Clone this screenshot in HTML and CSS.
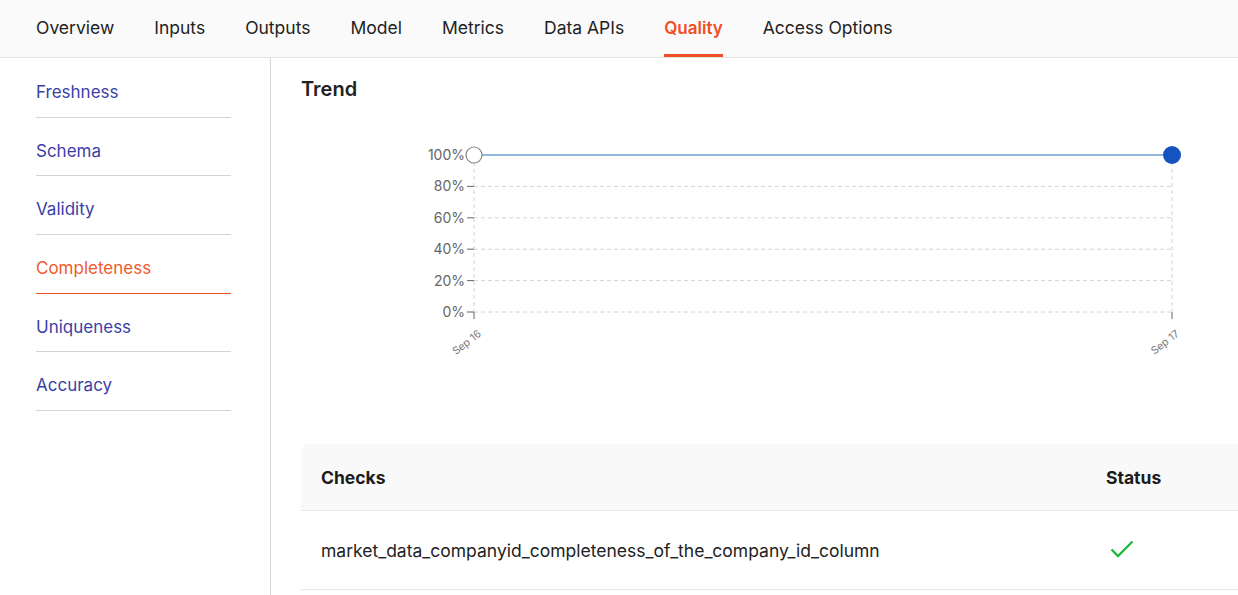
FILE: index.html
```html
<!DOCTYPE html>
<html>
<head>
<meta charset="utf-8">
<link rel="stylesheet" href="styles.css">
</head>
<body>
<nav class="tabs">
  <a class="tab">Overview</a>
  <a class="tab">Inputs</a>
  <a class="tab">Outputs</a>
  <a class="tab">Model</a>
  <a class="tab">Metrics</a>
  <a class="tab">Data APIs</a>
  <a class="tab active">Quality</a>
  <a class="tab">Access Options</a>
</nav>
<div class="layout">
  <aside class="side">
    <a class="side-item">Freshness</a>
    <a class="side-item">Schema</a>
    <a class="side-item">Validity</a>
    <a class="side-item active">Completeness</a>
    <a class="side-item">Uniqueness</a>
    <a class="side-item">Accuracy</a>
  </aside>
  <main class="main">
    <h2 class="title">Trend</h2>
    <svg class="chart" width="937" height="333" viewBox="0 0 937 333">
      <g class="grid" stroke="#d4d4d4" stroke-dasharray="4 3" fill="none">
        <line x1="173" y1="75.4" x2="871" y2="75.4"/>
        <line x1="173" y1="106.8" x2="871" y2="106.8"/>
        <line x1="173" y1="138.2" x2="871" y2="138.2"/>
        <line x1="173" y1="169.6" x2="871" y2="169.6"/>
        <line x1="173" y1="201" x2="871" y2="201"/>
        <line x1="173" y1="44" x2="173" y2="201"/>
        <line x1="871" y1="44" x2="871" y2="201"/>
      </g>
      <g stroke="#666" stroke-width="1">
        <line x1="166" y1="75.4" x2="173" y2="75.4"/>
        <line x1="166" y1="106.8" x2="173" y2="106.8"/>
        <line x1="166" y1="138.2" x2="173" y2="138.2"/>
        <line x1="166" y1="169.6" x2="173" y2="169.6"/>
        <line x1="166" y1="201" x2="173" y2="201"/>
        <line x1="173" y1="201" x2="173" y2="208"/>
        <line x1="871" y1="201" x2="871" y2="208"/>
      </g>
      <g class="ylab" text-anchor="end">
        <text x="164" y="49">100%</text>
        <text x="164" y="80.4">80%</text>
        <text x="164" y="111.8">60%</text>
        <text x="164" y="143.2">40%</text>
        <text x="164" y="174.6">20%</text>
        <text x="164" y="206">0%</text>
      </g>
      <g class="xlab" text-anchor="end">
        <text transform="translate(181 224) rotate(-38)">Sep 16</text>
        <text transform="translate(879 224) rotate(-38)">Sep 17</text>
      </g>
      <line x1="173" y1="44" x2="871" y2="44" stroke="#1f6fc0" stroke-width="1"/>
      <circle cx="173" cy="44" r="8" fill="#fff" stroke="#888" stroke-width="1.2"/>
      <circle cx="871" cy="44" r="9" fill="#1553c0"/>
    </svg>
    <div class="table">
      <div class="thead">
        <div class="c-check">Checks</div>
        <div class="c-status">Status</div>
      </div>
      <div class="row">
        <div class="c-check">market_data_companyid_completeness_of_the_company_id_column</div>
        <div class="c-status">
          <svg class="ok" width="24" height="18" viewBox="0 0 24 18"><path d="M1.5 9.5 L8 16 L22.5 1.5" fill="none" stroke="#22b83a" stroke-width="2.4"/></svg>
        </div>
      </div>
    </div>
  </main>
</div>
</body>
</html>
```
FILE: styles.css
```css
* { box-sizing: border-box; }
html, body { margin: 0; padding: 0; }
body {
  font-family: Inter, "Noto Sans", sans-serif;
  color: #222;
  background: #fff;
  width: 1238px;
  height: 595px;
  overflow: hidden;
}
.tabs {
  display: flex;
  gap: 40px;
  height: 58px;
  padding: 0 36px;
  background: #fafafa;
  border-bottom: 1px solid #e4e4e4;
}
.tab {
  display: flex;
  align-items: center;
  font-size: 17.5px;
  color: #222;
  border-bottom: 3px solid transparent;
  padding-top: 1px;
}
.tab.active {
  color: #f04e23;
  font-weight: 600;
  font-size: 17px;
  border-bottom-color: #f04e23;
}
.layout {
  display: flex;
  height: 537px;
}
.side {
  width: 271px;
  flex: none;
  border-right: 1px solid #d6d6d6;
  padding: 1px 39px 0 36px;
  display: flex;
  flex-direction: column;
}
.side-item {
  display: block;
  height: 58.7px;
  line-height: 66px;
  font-size: 17px;
  color: #3a3fa8;
  border-bottom: 1px solid #d4d4d4;
}
.side-item.active {
  color: #f05a2b;
  border-bottom-color: #e8532a;
}
.main {
  flex: 1;
  padding: 20px 0 0 30px;
  min-width: 0;
}
.title {
  margin: 0;
  font-size: 20px;
  font-weight: 600;
  line-height: 23px;
  color: #222;
}
.chart {
  display: block;
  margin-top: 10px;
}
.ylab text {
  font-size: 14px;
  fill: #666;
  font-family: Inter, sans-serif;
}
.xlab text {
  font-size: 10.5px;
  fill: #777;
  font-family: Inter, sans-serif;
}
.table {
  width: 100%;
}
.thead, .row {
  display: flex;
  align-items: center;
}
.thead {
  height: 67px;
  padding-top: 1px;
  background: #f9f9f9;
  border-top-left-radius: 8px;
  border-bottom: 1px solid #e8e8e8;
  font-weight: 700;
  font-size: 17.5px;
  color: #1c1c1c;
}
.row {
  height: 79px;
  padding-top: 1px;
  border-bottom: 1px solid #e8e8e8;
  font-size: 17.5px;
  color: #222;
}
.c-check {
  flex: 1;
  padding-left: 20px;
}
.c-status {
  width: 152px;
  flex: none;
  padding-left: 20px;
}
.ok {
  display: block;
  margin-left: 4px;
  margin-top: -4px;
}
```
